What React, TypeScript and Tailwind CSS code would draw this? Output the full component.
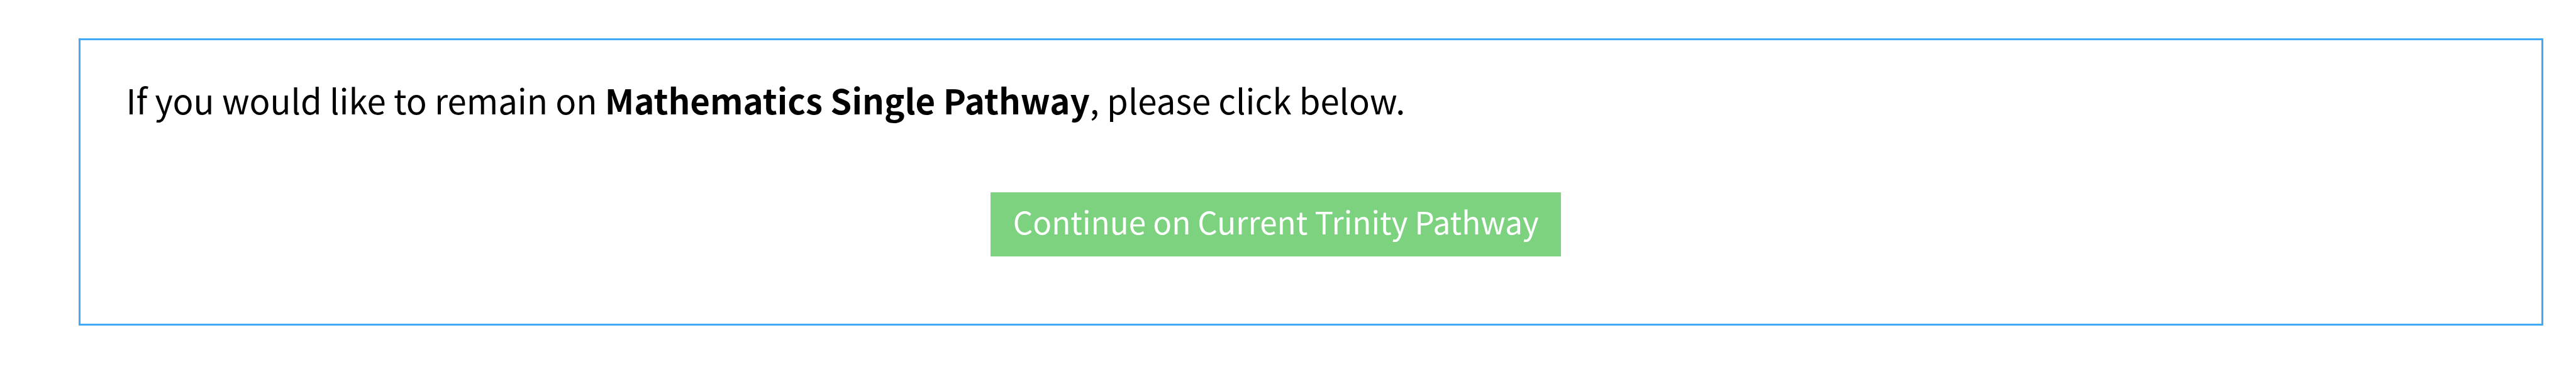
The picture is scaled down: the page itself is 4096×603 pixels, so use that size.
import React from 'react';

const PathwayButton = ({ label }: { label: string }) => (
  <button
    type="button"
    className="flex h-[102px] w-[907px] items-center justify-center bg-[#7dd280] pb-[10px] pl-[0.5px] text-[49.45px] leading-none whitespace-nowrap text-white"
  >
    {label}
  </button>
);

export default function App() {
  return (
    <main className="h-[603px] w-[4096px] overflow-hidden bg-white pt-[61px] pl-[125px] font-['Noto_Sans_CJK_SC',sans-serif] text-black">
      <section className="h-[457px] w-[3919px] border-3 border-[#3fa9f5] pt-[55px] pl-[72px]">
        <p className="h-[87px] pl-[0.5px] text-[54.53px] leading-[80px] whitespace-nowrap">
          If you would like to remain on <strong className="font-bold">Mathematics Single Pathway</strong>, please click below.
        </p>
        <div className="pt-[100px] pl-[1375px]">
          <PathwayButton label="Continue on Current Trinity Pathway" />
        </div>
      </section>
    </main>
  );
}
